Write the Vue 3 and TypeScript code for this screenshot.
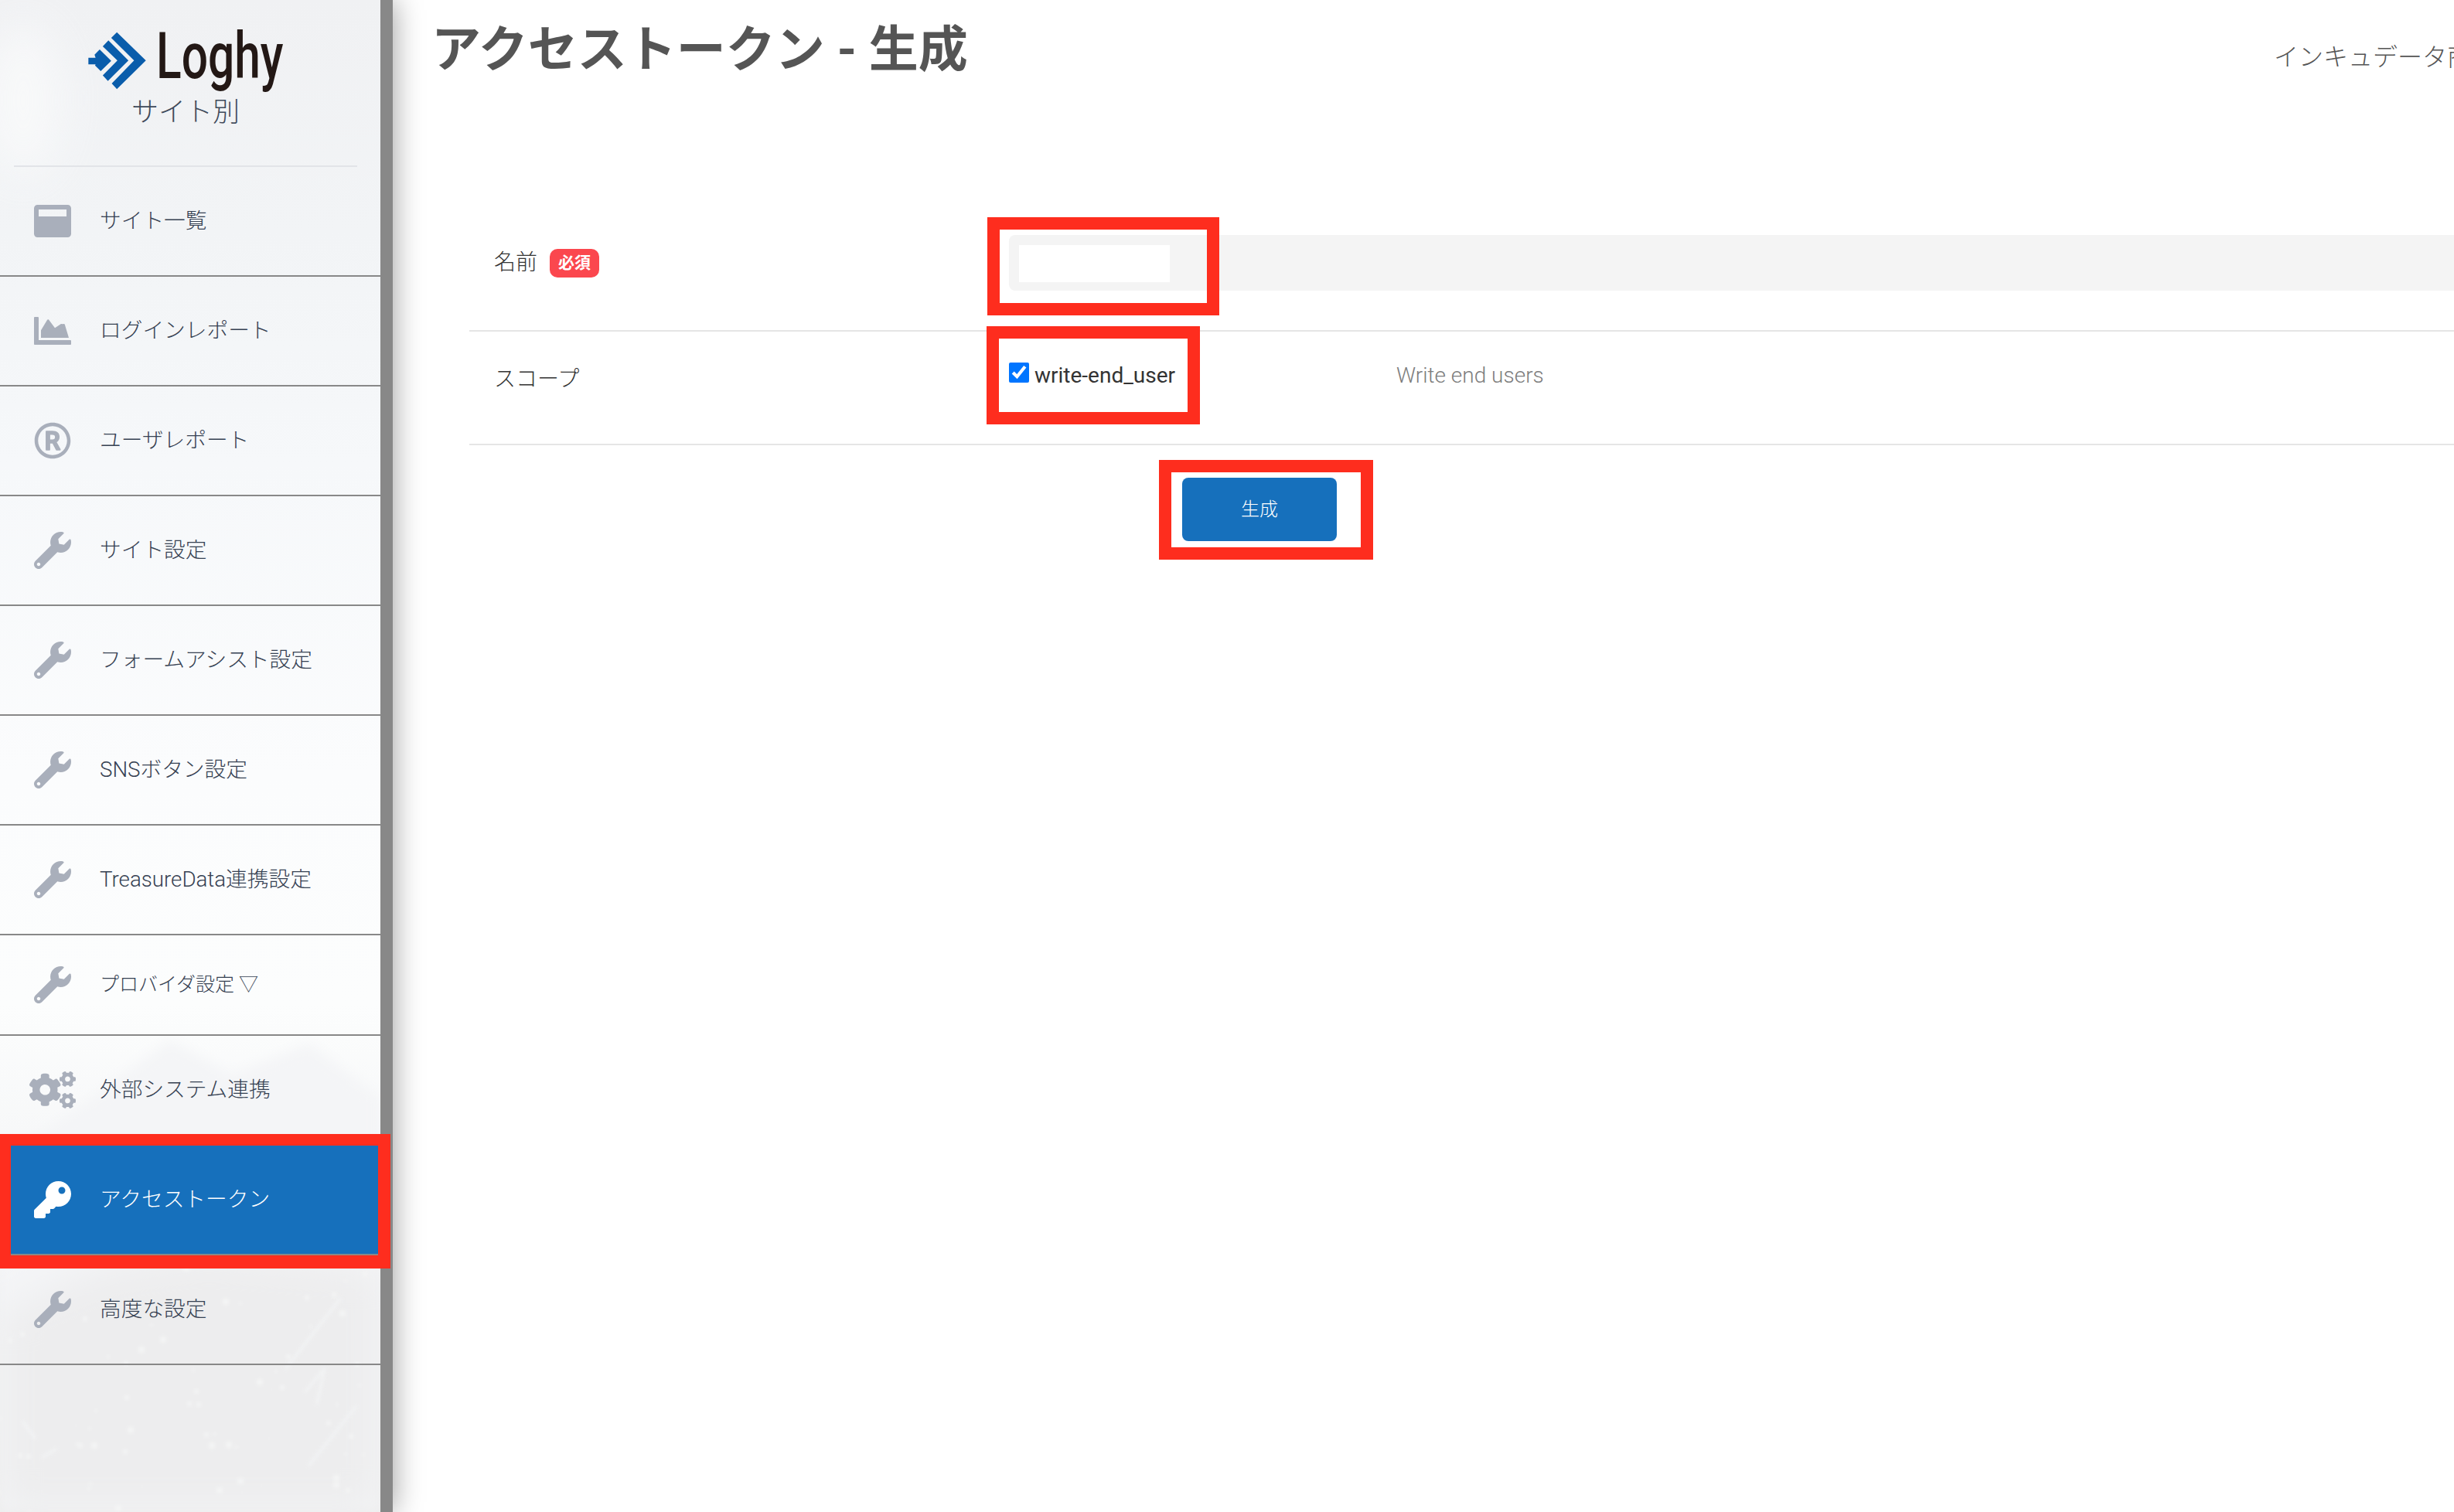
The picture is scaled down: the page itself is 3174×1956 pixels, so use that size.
<template>
  <div class="page">
    <aside class="sidebar">
      <!-- faded mountain photo behind the menu -->
      <svg class="sidebar-bg" width="492" height="1956" viewBox="0 0 492 1956">
        <defs>
          <filter id="soft" x="-20%" y="-20%" width="140%" height="140%"><feGaussianBlur stdDeviation="8" /></filter>
          <filter id="softer" x="-60%" y="-60%" width="220%" height="220%"><feGaussianBlur stdDeviation="26" /></filter>
          <filter id="tiny" x="-10%" y="-10%" width="120%" height="120%"><feGaussianBlur stdDeviation="2" /></filter>
        </defs>
        <ellipse cx="30" cy="130" rx="50" ry="100" fill="#f9fafb" opacity="0.8" filter="url(#softer)" />
        <polygon points="0,1500 120,1420 220,1345 300,1390 400,1350 492,1420 492,1956 0,1956" fill="#f4f5f7" filter="url(#soft)" />
        <polygon points="0,1700 130,1640 260,1620 492,1640 492,1956 0,1956" fill="#ededee" filter="url(#softer)" />
        <g filter="url(#tiny)" fill="#f4f5f5">
          <circle v-for="(s, i) in specks" :key="i" :cx="s.x" :cy="s.y" :r="s.r" />
        </g>
        <g filter="url(#tiny)" stroke="#f3f4f5" stroke-width="4" fill="none" stroke-linecap="round" opacity="0.8">
          <path d="M370 1770 L440 1680" />
          <path d="M395 1800 L420 1770 L410 1815" />
          <path d="M30 1840 L45 1860" />
          <path d="M55 1885 L72 1875" />
          <path d="M400 1895 L460 1820" />
        </g>
      </svg>

      <div class="brand">
        <div class="logo">
          <svg class="logo-mark" viewBox="40 25 232 232" width="77" height="77">
            <path fill="#0a5dab" d="M155 30 268 140 155 252 135 230 222 140 133 52zM122 62 200 140 120 220 100 198 157 140 100 85zM88 97 133 142 92 182 70 160 72 155H44V130H72L68 118z" />
          </svg>
          <div class="logo-word"><span>Loghy</span></div>
        </div>
        <div class="brand-sub">サイト別</div>
      </div>
      <div class="brand-line"></div>

      <nav class="menu">
        <a
          v-for="item in menu"
          :key="item.label"
          class="menu-item"
          :class="{ active: item.active, short: item.short }"
        >
          <span class="menu-icon">
            <svg :width="icons[item.icon].w" :height="icons[item.icon].h" :viewBox="icons[item.icon].box" fill="currentColor">
              <path fill-rule="evenodd" :d="icons[item.icon].d" />
            </svg>
          </span>
          <span class="menu-label">{{ item.label }}</span>
        </a>
      </nav>
    </aside>

    <main class="content">
      <header class="head">
        <h1 class="title">アクセストークン - 生成</h1>
        <div class="account">インキュデータ商事株式会社</div>
      </header>

      <form class="form" @submit.prevent>
        <div class="row row-name">
          <div class="row-label">
            名前
            <span class="badge">必須</span>
          </div>
          <div class="input-box">
            <div class="input-mask"></div>
          </div>
        </div>
        <div class="row row-scope">
          <div class="row-label">スコープ</div>
          <label class="scope-check">
            <input type="checkbox" checked />
            <span>write-end_user</span>
          </label>
          <div class="scope-desc">Write end users</div>
        </div>
        <div class="actions">
          <button class="submit" type="submit">生成</button>
        </div>
      </form>
    </main>

    <!-- red guide frames drawn over the screenshot -->
    <div class="mark mark-nav"></div>
    <div class="mark mark-input"></div>
    <div class="mark mark-check"></div>
    <div class="mark mark-button"></div>
  </div>
</template>

<script setup lang="ts">
interface MenuItem {
  label: string
  icon: string
  active?: boolean
  short?: boolean
}

interface IconDef {
  w: number
  h: number
  box: string
  d: string
}

const wrench =
  'M507.73 109.1c-2.24-9.03-13.54-12.09-20.12-5.51l-74.36 74.36-67.88-11.31-11.31-67.88 74.36-74.36c6.62-6.62 3.43-17.9-5.66-20.16-47.38-11.74-99.55.91-136.58 37.93-39.64 39.64-50.55 97.1-34.05 147.2L18.74 402.76c-24.99 24.99-24.99 65.51 0 90.5 24.99 24.99 65.51 24.99 90.5 0l213.21-213.21c50.12 16.71 107.47 5.68 147.37-34.22 37.07-37.07 49.7-89.32 37.91-136.73zM64 472c-13.25 0-24-10.75-24-24 0-13.26 10.75-24 24-24s24 10.74 24 24c0 13.25-10.75 24-24 24z'

const icons: Record<string, IconDef> = {
  window: {
    w: 48,
    h: 48,
    box: '0 0 512 512',
    d: 'M464 32H48C21.5 32 0 53.5 0 80v352c0 26.5 21.5 48 48 48h416c26.5 0 48-21.5 48-48V80c0-26.5-21.5-48-48-48zM64 96h384v96H64z'
  },
  chart: {
    w: 48,
    h: 48,
    box: '0 0 512 512',
    d: 'M500 384c6.6 0 12 5.4 12 12v40c0 6.6-5.4 12-12 12H12c-6.6 0-12-5.4-12-12V76c0-6.6 5.4-12 12-12h40c6.6 0 12 5.4 12 12v308h436zM372.7 159.5L288 216l-85.3-113.7c-5.1-6.8-15.5-6.3-19.9 1L96 248v104h384l-53.9-179.7c-3.2-10.7-15.8-15.2-25.1-8.8z'
  },
  registered: {
    w: 48,
    h: 48,
    box: '0 0 512 512',
    d: 'M256 8C119.033 8 8 119.033 8 256s111.033 248 248 248 248-111.033 248-248S392.967 8 256 8zm0 448c-110.532 0-200-89.451-200-200 0-110.531 89.451-200 200-200 110.532 0 200 89.451 200 200 0 110.532-89.451 200-200 200zm110.442-81.791c-53.046-96.284-50.25-91.468-53.271-96.085 24.267-13.879 39.482-41.563 39.482-73.176 0-52.503-30.247-85.252-101.498-85.252h-78.667c-6.617 0-12 5.383-12 12V380c0 6.617 5.383 12 12 12h38.568c6.617 0 12-5.383 12-12v-83.663h31.958l47.515 89.99a12 12 0 0 0 10.593 6.368h42.81c9.14 0 14.914-9.799 10.51-17.791zM256.933 239.906h-33.875v-64.14h27.377c32.417 0 38.929 12.133 38.929 31.709-.001 20.913-11.518 32.431-32.431 32.431z'
  },
  wrench: { w: 48, h: 48, box: '0 0 512 512', d: wrench },
  cogs: {
    w: 60,
    h: 48,
    box: '0 0 640 512',
    d: 'M512.1 191l-8.2 14.3c-3 5.3-9.4 7.5-15.1 5.4-11.8-4.4-22.6-10.7-32.1-18.6-4.6-3.8-5.8-10.5-2.8-15.7l8.2-14.3c-6.9-8-12.3-17.3-15.9-27.4h-16.5c-6 0-11.2-4.3-12.2-10.3-2-12-2.1-24.6 0-37.1 1-6 6.2-10.4 12.2-10.4h16.5c3.6-10.1 9-19.4 15.9-27.4l-8.2-14.3c-3-5.2-1.9-11.9 2.8-15.7 9.5-7.9 20.4-14.2 32.1-18.6 5.7-2.1 12.1.1 15.1 5.4l8.2 14.3c10.5-1.9 21.2-1.9 31.7 0L552 6.3c3-5.3 9.4-7.5 15.1-5.4 11.8 4.4 22.6 10.7 32.1 18.6 4.6 3.8 5.8 10.5 2.8 15.7l-8.2 14.3c6.9 8 12.3 17.3 15.9 27.4h16.5c6 0 11.2 4.3 12.2 10.3 2 12 2.1 24.6 0 37.1-1 6-6.2 10.4-12.2 10.4h-16.5c-3.6 10.1-9 19.4-15.9 27.4l8.2 14.3c3 5.2 1.9 11.9-2.8 15.7-9.5 7.9-20.4 14.2-32.1 18.6-5.7 2.1-12.1-.1-15.1-5.4l-8.2-14.3c-10.4 1.9-21.2 1.9-31.7 0zm-10.5-58.8c38.5 29.6 82.4-14.3 52.8-52.8-38.5-29.7-82.4 14.3-52.8 52.8zM386.3 286.1l33.7 16.8c10.1 5.8 14.5 18.1 10.5 29.1-8.9 24.2-26.4 46.4-42.6 65.8-7.4 8.9-20.2 11.1-30.3 5.3l-29.1-16.8c-16 13.7-34.6 24.6-54.9 31.7v33.6c0 11.6-8.3 21.6-19.7 23.6-24.6 4.2-50.4 4.4-75.9 0-11.5-2-20-11.9-20-23.6V418c-20.3-7.2-38.9-18-54.9-31.7L74 403c-10 5.8-22.9 3.6-30.3-5.3-16.2-19.4-33.3-41.6-42.2-65.7-4-10.9.4-23.2 10.5-29.1l33.3-16.8c-3.9-20.9-3.9-42.4 0-63.4L12 205.8c-10.1-5.8-14.6-18.1-10.5-29 8.9-24.2 26-46.4 42.2-65.8 7.4-8.9 20.2-11.1 30.3-5.3l29.1 16.8c16-13.7 34.6-24.6 54.9-31.7V57.1c0-11.5 8.2-21.5 19.6-23.5 24.6-4.2 50.5-4.4 76-.1 11.5 2 20 11.9 20 23.6v33.6c20.3 7.2 38.9 18 54.9 31.7l29.1-16.8c10-5.8 22.9-3.6 30.3 5.3 16.2 19.4 33.2 41.6 42.1 65.8 4 10.9.1 23.2-10 29.1l-33.7 16.8c3.9 21 3.9 42.5 0 63.5zm-117.6 21.1c59.2-77-28.7-164.9-105.7-105.7-59.2 77 28.7 164.9 105.7 105.7zm243.4 182.7l-8.2 14.3c-3 5.3-9.4 7.5-15.1 5.4-11.8-4.4-22.6-10.7-32.1-18.6-4.6-3.8-5.8-10.5-2.8-15.7l8.2-14.3c-6.9-8-12.3-17.3-15.9-27.4h-16.5c-6 0-11.2-4.3-12.2-10.3-2-12-2.1-24.6 0-37.1 1-6 6.2-10.4 12.2-10.4h16.5c3.6-10.1 9-19.4 15.9-27.4l-8.2-14.3c-3-5.2-1.9-11.9 2.8-15.7 9.5-7.9 20.4-14.2 32.1-18.6 5.7-2.1 12.1.1 15.1 5.4l8.2 14.3c10.5-1.9 21.2-1.9 31.7 0l8.2-14.3c3-5.3 9.4-7.5 15.1-5.4 11.8 4.4 22.6 10.7 32.1 18.6 4.6 3.8 5.8 10.5 2.8 15.7l-8.2 14.3c6.9 8 12.3 17.3 15.9 27.4h16.5c6 0 11.2 4.3 12.2 10.3 2 12 2.1 24.6 0 37.1-1 6-6.2 10.4-12.2 10.4h-16.5c-3.6 10.1-9 19.4-15.9 27.4l8.2 14.3c3 5.2 1.9 11.9-2.8 15.7-9.5 7.9-20.4 14.2-32.1 18.6-5.7 2.1-12.1-.1-15.1-5.4l-8.2-14.3c-10.4 1.9-21.2 1.9-31.7 0zM501.6 431c38.5 29.6 82.4-14.3 52.8-52.8-38.5-29.6-82.4 14.3-52.8 52.8z'
  },
  key: {
    w: 48,
    h: 48,
    box: '0 0 512 512',
    d: 'M512 176.001C512 273.203 433.202 352 336 352c-11.22 0-22.19-1.062-32.827-3.069l-24.012 27.014A23.999 23.999 0 0 1 261.223 384H224v40c0 13.255-10.745 24-24 24h-40v40c0 13.255-10.745 24-24 24H24c-13.255 0-24-10.745-24-24v-78.059c0-6.365 2.529-12.47 7.029-16.971l161.802-161.802C163.108 213.814 160 195.271 160 176 160 78.798 238.797.001 335.999 0 433.488-.001 512 78.511 512 176.001zM336 128c0 26.51 21.49 48 48 48s48-21.49 48-48-21.49-48-48-48-48 21.49-48 48z'
  }
}

const menu: MenuItem[] = [
  { label: 'サイト一覧', icon: 'window' },
  { label: 'ログインレポート', icon: 'chart' },
  { label: 'ユーザレポート', icon: 'registered' },
  { label: 'サイト設定', icon: 'wrench' },
  { label: 'フォームアシスト設定', icon: 'wrench' },
  { label: 'SNSボタン設定', icon: 'wrench' },
  { label: 'TreasureData連携設定', icon: 'wrench' },
  { label: 'プロバイダ設定 ▽', icon: 'wrench', short: true },
  { label: '外部システム連携', icon: 'cogs' },
  { label: 'アクセストークン', icon: 'key', active: true },
  { label: '高度な設定', icon: 'wrench' }
]

// scattered snow flecks in the lower part of the photo
let seed = 7
const rand = () => {
  seed = (seed * 16807) % 2147483647
  return seed / 2147483647
}
const specks = Array.from({ length: 70 }, () => ({
  x: Math.round(rand() * 492),
  y: Math.round(1640 + rand() * 316),
  r: Math.round(1 + rand() * 3)
}))
</script>

<style scoped>
.page {
  position: relative;
  display: flex;
  width: 100%;
  height: 100vh;
  overflow: hidden;
  background: #fff;
  font-family: Roboto, "Noto Sans CJK JP", sans-serif;
}

.sidebar {
  position: relative;
  z-index: 1;
  flex: 0 0 508px;
  box-sizing: border-box;
  border-right: 16px solid #888;
  background: linear-gradient(to bottom, #f0f1f3 0, #f2f4f6 300px, #f6f8fa 600px, #fbfcfd 1000px, #fcfdfd 1300px, #f6f7f8 1500px, #eeeff0 1800px, #ececec 100%);
  box-shadow: 0 0 36px rgba(0, 0, 0, 0.4);
}

.sidebar-bg {
  position: absolute;
  top: 0;
  left: 0;
}

.brand {
  position: relative;
  height: 214px;
  box-sizing: border-box;
  padding-top: 38px;
}

.logo {
  display: flex;
  align-items: flex-start;
  height: 80px;
  padding-left: 113px;
}

.logo-mark {
  flex: none;
  margin-top: 2px;
}

.logo-word {
  width: 161px;
  margin: -5px 0 0 12px;
  height: 80px;
  color: #231815;
  font-family: Roboto, sans-serif;
  font-size: 84px;
  font-weight: 500;
  line-height: 80px;
}

.logo-word span {
  display: inline-block;
  transform: scaleX(0.72);
  transform-origin: left top;
}

.brand-sub {
  margin-top: 8px;
  padding-right: 12px;
  text-align: center;
  color: #3f4a5a;
  font-size: 35px;
  font-weight: 300;
  line-height: 40px;
}

.brand-line {
  position: relative;
  height: 2px;
  margin: 0 30px 0 18px;
  background: #e2e4e8;
}

.menu {
  position: relative;
  display: flex;
  flex-direction: column;
}

.menu-item {
  display: flex;
  align-items: center;
  gap: 31px;
  box-sizing: border-box;
  height: 142px;
  padding-left: 38px;
  border-bottom: 2px solid #888;
  color: #364152;
  font-size: 27.7px;
  font-weight: 300;
}

.menu-item.short {
  height: 130px;
  font-size: 25px;
}

.menu-item.active {
  background: #1670bc;
  color: #fff;
}

.menu-icon {
  display: flex;
  flex: 0 0 60px;
  justify-content: center;
  color: #a9afbb;
}

.menu-label {
  margin-top: -6px;
}

.menu-item.active .menu-icon {
  color: #fff;
}

.content {
  flex: 1;
  min-width: 0;
  padding-left: 50px;
}

.head {
  display: flex;
  padding-top: 33px;
  height: 61px;
}

.title {
  margin: 0;
  color: #555;
  font-size: 64px;
  font-weight: 700;
  line-height: 64px;
}

.account {
  flex: 0 0 233px;
  margin-left: auto;
  overflow: hidden;
  padding-top: 21px;
  color: #555;
  font-size: 32px;
  font-weight: 300;
  line-height: 40px;
  white-space: nowrap;
}

.form {
  margin: 180px 0 0 49px;
}

.row {
  display: flex;
  border-bottom: 2px solid #e5e5e5;
}

.row-name {
  height: 155px;
  box-sizing: border-box;
  padding-top: 30px;
}

.row-scope {
  height: 147px;
  box-sizing: border-box;
  padding-top: 40px;
}

.row-label {
  display: flex;
  flex: 0 0 666px;
  align-items: flex-start;
  gap: 16px;
  height: 40px;
  padding-left: 32px;
  color: #333;
  font-size: 28px;
  font-weight: 300;
  line-height: 36px;
}

.row-name .row-label {
  margin-top: 18px;
}

.row-scope .row-label {
  margin-top: 4px;
}

.badge {
  display: flex;
  align-items: center;
  justify-content: center;
  width: 64px;
  height: 37px;
  border-radius: 10px;
  background: #fb474e;
  color: #fff;
  font-size: 21px;
  font-weight: 700;
  line-height: 37px;
}

.input-box {
  flex: 1;
  box-sizing: border-box;
  height: 72px;
  padding: 13px;
  border-radius: 8px 0 0 8px;
  background: #f4f4f4;
}

.input-mask {
  width: 195px;
  height: 48px;
  background: #fff;
}

.scope-check {
  display: flex;
  flex: 0 0 501px;
  align-items: flex-start;
  gap: 7px;
  color: #333;
  font-size: 28px;
  line-height: 34px;
}

.scope-check input {
  width: 26px;
  height: 26px;
  margin: 0;
}

.scope-desc {
  color: #7d7d7d;
  font-size: 28px;
  font-weight: 300;
  line-height: 34px;
}

.actions {
  margin: 42px 0 0 922px;
}

.submit {
  display: block;
  width: 200px;
  height: 82px;
  padding: 0 0 6px;
  border: 0;
  border-radius: 8px;
  background: #1670bc;
  color: #fff;
  font-family: inherit;
  font-size: 24px;
  font-weight: 300;
}

.mark {
  position: absolute;
  z-index: 2;
  box-sizing: border-box;
  border: 16px solid #fe2d1e;
}

.mark-nav {
  left: 0;
  top: 1467px;
  width: 505px;
  height: 174px;
  border-width: 15px 16px 17px 14px;
}

.mark-input {
  left: 1277px;
  top: 281px;
  width: 300px;
  height: 127px;
}

.mark-check {
  left: 1276px;
  top: 422px;
  width: 276px;
  height: 127px;
}

.mark-button {
  left: 1499px;
  top: 595px;
  width: 277px;
  height: 129px;
}
</style>
